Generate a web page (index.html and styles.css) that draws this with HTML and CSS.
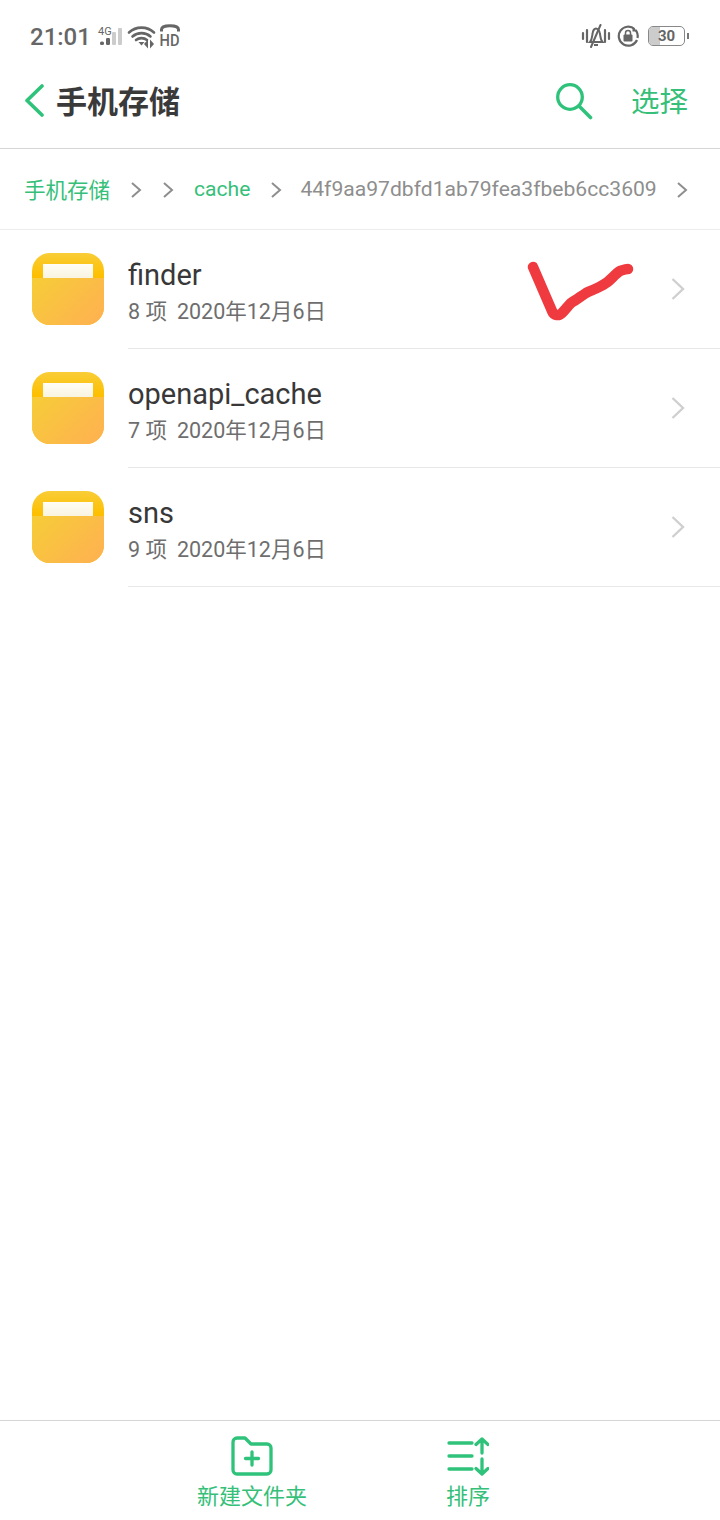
FILE: index.html
```html
<!DOCTYPE html>
<html lang="zh-CN">
<head>
<meta charset="utf-8">
<title>手机存储</title>
<link rel="stylesheet" href="styles.css">
</head>
<body>
<div class="page">
  <div class="status">
    <div class="status-left">
      <span class="time">21:01</span>
      <span class="net"><span class="net-label">4G</span>
        <svg class="bars" width="25" height="19" viewBox="0 0 25 19"><rect x="2" y="14.500" width="4" height="3.500" rx="1.500" fill="#666"/><rect x="8" y="11" width="4" height="7" rx="1.200" fill="#666"/><rect x="14" y="5" width="4" height="13" rx="1" fill="#ccc"/><rect x="20" y="1" width="4" height="17" rx="1" fill="#ccc"/></svg>
      </span>
      <svg class="wifi" width="30" height="24" viewBox="0 0 30 24" fill="none"><path d="M2 7.500C9 1 20 1 27 7.500M5.500 11.500C10.500 7 18.500 7 23.500 11.500M9 15C12 12.500 17 12.500 20 15" stroke="#666" stroke-width="2.600" stroke-linecap="round"/><path d="M11.500 17h6l-3 3.500z" fill="#666"/><path d="M21 14.500v9l-4-4.500zM23 14.500v9l4-4.500z" fill="#666"/></svg>
      <span class="hd"><svg class="hd-arc" width="20" height="8" viewBox="0 0 20 8" fill="none"><path d="M1.500 7.500V5.500C1.500 .5 18.500 .5 18.500 5.500v2" stroke="#666" stroke-width="3"/></svg><span class="hd-text">HD</span></span>
    </div>
    <div class="status-right">
      <svg class="vib" width="30" height="24" viewBox="0 0 30 24" fill="none"><path d="M2 9v6M6 6v12M24 6v12M28 9v6" stroke="#666" stroke-width="2.200" stroke-linecap="round"/><path d="M9 18c2-2 2-5 2.500-8C12 6 14 4.500 15 4.500S18.500 6 19 10c.5 3 .5 6 2.500 8zM13 21h4" stroke="#666" stroke-width="2"/><path d="M19.500 1L10 23" stroke="#666" stroke-width="2" stroke-linecap="round"/></svg>
      <svg class="lock" width="23" height="22" viewBox="0 0 23 22" fill="none"><path d="M20 15A9.500 9.500 0 1 1 17.500 4" stroke="#666" stroke-width="2.200"/><path d="M20.500 13a9.500 9.500 0 0 0-2-8" stroke="#666" stroke-width="2.200"/><path d="M15.500 1.500v5h5z" fill="#666"/><rect x="6.500" y="9.500" width="9" height="7" rx="1" fill="#666"/><path d="M8.500 10V8a2.500 2.500 0 0 1 5 0v2" stroke="#666" stroke-width="1.500"/></svg>
      <span class="battery"><span class="battery-body"><span class="battery-fill"></span><span class="battery-num">30</span></span><span class="battery-tip"></span></span>
    </div>
  </div>

  <header class="header">
    <div class="header-left">
      <svg class="back" width="22" height="34" viewBox="0 0 22 34" fill="none"><path d="M18 2L3 16.500 18 31" stroke="#2fc27a" stroke-width="3.600" stroke-linecap="round" stroke-linejoin="round"/></svg>
      <h1 class="title">手机存储</h1>
    </div>
    <div class="header-right">
      <svg class="search" width="38" height="38" viewBox="0 0 38 38" fill="none"><circle cx="15" cy="15" r="12.300" stroke="#2fc27a" stroke-width="3.300"/><path d="M24 24l11.500 11.500" stroke="#2fc27a" stroke-width="3.600" stroke-linecap="round"/></svg>
      <span class="select">选择</span>
    </div>
  </header>

  <nav class="crumbs">
    <span class="crumb green cjk">手机存储</span>
    <svg class="sep s1" width="12" height="18" viewBox="0 0 12 18" fill="none"><path d="M2 2l8 7-8 7" stroke="#8e8e8e" stroke-width="2"/></svg>
    <svg class="sep s2" width="12" height="18" viewBox="0 0 12 18" fill="none"><path d="M2 2l8 7-8 7" stroke="#8e8e8e" stroke-width="2"/></svg>
    <span class="crumb green">cache</span>
    <svg class="sep s3" width="12" height="18" viewBox="0 0 12 18" fill="none"><path d="M2 2l8 7-8 7" stroke="#8e8e8e" stroke-width="2"/></svg>
    <span class="crumb grey">44f9aa97dbfd1ab79fea3fbeb6cc3609</span>
    <svg class="sep s4" width="12" height="18" viewBox="0 0 12 18" fill="none"><path d="M2 2l8 7-8 7" stroke="#8e8e8e" stroke-width="2"/></svg>
  </nav>

  <main class="list">
    <div class="row">
      <span class="folder"><span class="folder-paper"></span><span class="folder-front"></span></span>
      <div class="row-body">
        <div class="row-text"><div class="name">finder</div><div class="meta"><span>8 项</span><span>2020年12月6日</span></div></div>
        <svg class="chev" width="16" height="24" viewBox="0 0 16 24" fill="none"><path d="M2.500 2l10.500 10L2.500 22" stroke="#cfcfcf" stroke-width="2.400"/></svg>
      </div>
      <svg class="scribble" width="112" height="66" viewBox="0 0 112 66" fill="none"><path d="M6 6L25 50c2 5 7 5 10 2 3-3 6-7 9-10 5-3 9-6 15-10 6-3 13-5 20-10 5-3 9-9 14-12 3-1 5-2 8-2" stroke="#ef3a3f" stroke-width="10.500" stroke-linecap="round" stroke-linejoin="round"/></svg>
    </div>
    <div class="row">
      <span class="folder"><span class="folder-paper"></span><span class="folder-front"></span></span>
      <div class="row-body">
        <div class="row-text"><div class="name">openapi_cache</div><div class="meta"><span>7 项</span><span>2020年12月6日</span></div></div>
        <svg class="chev" width="16" height="24" viewBox="0 0 16 24" fill="none"><path d="M2.500 2l10.500 10L2.500 22" stroke="#cfcfcf" stroke-width="2.400"/></svg>
      </div>
    </div>
    <div class="row">
      <span class="folder"><span class="folder-paper"></span><span class="folder-front"></span></span>
      <div class="row-body">
        <div class="row-text"><div class="name">sns</div><div class="meta"><span>9 项</span><span>2020年12月6日</span></div></div>
        <svg class="chev" width="16" height="24" viewBox="0 0 16 24" fill="none"><path d="M2.500 2l10.500 10L2.500 22" stroke="#cfcfcf" stroke-width="2.400"/></svg>
      </div>
    </div>
  </main>

  <footer class="toolbar">
    <div class="tool tool-new">
      <svg width="42" height="40" viewBox="0 0 42 40" fill="none"><path d="M2 6a4 4 0 0 1 4-4h8l6 6h16a4 4 0 0 1 4 4v22a4 4 0 0 1-4 4H6a4 4 0 0 1-4-4z" stroke="#2fc27a" stroke-width="3.300" stroke-linejoin="round"/><path d="M21 16v13M14.500 22.500h13" stroke="#2fc27a" stroke-width="3.300" stroke-linecap="round"/></svg>
      <span class="tool-label">新建文件夹</span>
    </div>
    <div class="tool tool-sort">
      <svg width="42" height="40" viewBox="0 0 42 40" fill="none"><path d="M2 7h23M2 20h23M2 33h23" stroke="#2fc27a" stroke-width="3.300" stroke-linecap="round"/><path d="M35 3v14M29 8.500L35 3l6 5.500M35 23v15M29 32.500l6 5.500 6-5.500" stroke="#2fc27a" stroke-width="3.300" stroke-linecap="round" stroke-linejoin="round"/></svg>
      <span class="tool-label">排序</span>
    </div>
  </footer>
</div>
</body>
</html>
```

FILE: styles.css
```css
* { box-sizing: border-box; }
html, body { margin: 0; padding: 0; background: #fff; }
body { font-family: Roboto, "Noto Sans CJK SC", sans-serif; }
.page { width: 720px; height: 1520px; display: flex; flex-direction: column; background: #fff; overflow: hidden; }

.status { height: 72px; padding: 22px 31px 0 30px; display: flex; justify-content: space-between; align-items: flex-start; color: #666; }
.status-left { display: flex; align-items: center; height: 30px; }
.status-right { display: flex; align-items: center; height: 28px; }
.time { font-size: 24px; font-weight: 500; line-height: 30px; width: 68px; }
.net { position: relative; width: 25px; height: 30px; display: block; }
.net-label { position: absolute; left: 0; top: 4px; font-size: 11px; line-height: 11px; }
.bars { position: absolute; left: 0; top: 5px; }
.wifi { margin-left: 4px; }
.hd { display: flex; flex-direction: column; align-items: center; width: 20px; margin-left: 3px; height: 26px; }
.hd-arc { display: block; flex: none; }
.hd-text { font-size: 17px; font-weight: 500; line-height: 15px; transform: scaleX(.86); margin-top: 1px; }
.lock { margin-left: 6px; }
.battery { display: flex; align-items: center; margin-left: 8px; }
.battery-body { position: relative; width: 37px; height: 20px; border: 1.500px solid #888; border-radius: 5px; display: flex; align-items: center; justify-content: center; overflow: hidden; }
.battery-fill { position: absolute; left: 0; top: 0; bottom: 0; width: 11px; background: #ccc; }
.battery-num { position: relative; font-size: 15px; font-weight: 700; color: #666; }
.battery-tip { width: 2px; height: 6px; margin-left: 2px; background: #777; }

.header { height: 77px; padding: 0 32px 18px 24px; display: flex; justify-content: space-between; align-items: center; border-bottom: 1px solid #d6d6d6; }
.header-left { display: flex; align-items: center; gap: 10px; }
.back { display: block; }
.title { margin: -3px 0 0; font-size: 31px; font-weight: 700; color: #3a3a3a; line-height: 44px; font-family: "Noto Sans CJK SC", sans-serif; }
.header-right { display: flex; align-items: center; gap: 38px; }
.search { display: block; }
.select { margin-top: -2px; font-size: 28.500px; line-height: 40px; color: #35bf79; font-family: "Noto Sans CJK SC", sans-serif; }

.crumbs { height: 81px; padding-left: 24px; display: flex; align-items: center; border-bottom: 1px solid #ededed; font-size: 21.100px; }
.crumb { white-space: nowrap; line-height: 30px; }
.cjk { font-family: "Noto Sans CJK SC", sans-serif; font-size: 21.500px; }
.green { color: #35bf79; }
.grey { color: #8e8e8e; }
.sep { display: block; flex: none; margin-top: 1px; }
.s1 { margin-left: 20px; }
.s2 { margin-left: 20px; }
.s3 { margin-left: 20px; margin-right: 18px; }
.s2 + .green { margin-left: 20px; }
.s4 { margin-left: 19px; }

.list { flex: 1; display: flex; flex-direction: column; }
.row { position: relative; height: 119px; padding-left: 32px; display: flex; align-items: stretch; }
.folder { position: relative; flex: none; width: 72px; height: 72px; margin-top: 23px; border-radius: 18px; overflow: hidden; background: linear-gradient(#f9cd38, #fdbf00 32%); }
.folder-paper { position: absolute; left: 11px; top: 11px; width: 50px; height: 15px; background: linear-gradient(#fffdf5, #f8f3df); }
.folder-front { position: absolute; left: 0; right: 0; top: 25px; bottom: 0; background: linear-gradient(135deg, #f6cd37, #ffb052); }
.row-body { flex: 1; margin-left: 24px; display: flex; justify-content: space-between; align-items: center; padding-right: 34px; border-bottom: 1px solid #e8e8e8; }
.row-text { padding: 6px 0 1px; }
.name { font-size: 29px; color: #383838; line-height: 34px; }
.meta { margin-top: 6px; font-size: 21.500px; line-height: 28px; color: #6e6e6e; display: flex; gap: 10px; }
.chev { display: block; }
.scribble { position: absolute; left: 527px; top: 31px; }

.toolbar { height: 100px; border-top: 1px solid #d6d6d6; position: relative; }
.tool { display: flex; flex-direction: column; align-items: center; position: absolute; top: 15px; }
.tool-new { left: 197px; width: 110px; }
.tool-sort { left: 446px; width: 44px; }
.tool-label { font-size: 22px; line-height: 32px; color: #35bf79; margin-top: 2px; font-family: "Noto Sans CJK SC", sans-serif; white-space: nowrap; }
```
